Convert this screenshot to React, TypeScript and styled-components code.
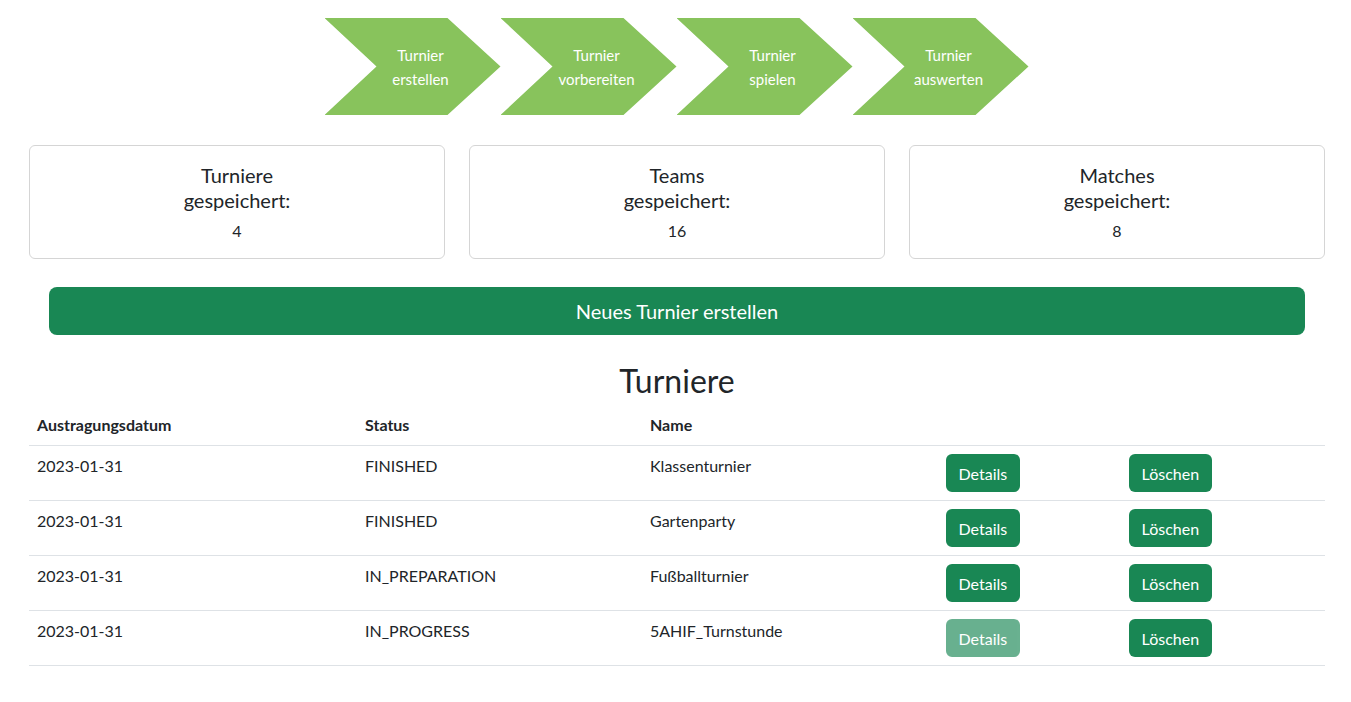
import React from "react";
import styled, { createGlobalStyle } from "styled-components";

const Global = createGlobalStyle`
  html, body { margin: 0; padding: 0; background: #fff; }
  body {
    font-family: "Segoe UI", Lato, "Noto Sans", "Liberation Sans", sans-serif;
    font-size: 16px;
    line-height: 1.5;
    color: #212529;
  }
  * { box-sizing: border-box; }
`;

const Page = styled.div`
  padding: 18px 26px 0 29px;
`;

const Steps = styled.div`
  display: flex;
  justify-content: center;
  padding-right: 1px;
`;

const Step = styled.div`
  width: 176px;
  height: 97px;
  background: #88c35c;
  clip-path: polygon(0 0, 123px 0, 176px 48.5px, 123px 97px, 0 97px, 52px 48.5px);
  color: #fff;
  font-size: 15px;
  line-height: 24px;
  display: flex;
  align-items: center;
  justify-content: center;
  text-align: center;
  padding-left: 16px;
  white-space: pre-line;
`;

const Cards = styled.div`
  display: grid;
  grid-template-columns: repeat(3, 1fr);
  gap: 24px;
  margin-top: 30px;
`;

const Card = styled.div`
  border: 1px solid #d5d5d5;
  border-radius: 6px;
  height: 114px;
  display: flex;
  flex-direction: column;
  align-items: center;
  padding-top: 17px;
`;

const CardTitle = styled.div`
  font-size: 20px;
  line-height: 25px;
  text-align: center;
  white-space: pre-line;
`;

const CardValue = styled.div`
  font-size: 16px;
  line-height: 24px;
  margin-top: 6px;
`;

const BigButton = styled.button`
  display: block;
  width: calc(100% - 40px);
  margin: 28px 20px 0;
  height: 48px;
  border: none;
  border-radius: 8px;
  background: #198754;
  color: #fff;
  font-family: inherit;
  font-size: 20px;
`;

const Heading = styled.h2`
  margin: 27px 0 5px;
  font-size: 32px;
  font-weight: 400;
  line-height: 1.2;
  text-align: center;
`;

const Table = styled.table`
  width: 100%;
  border-collapse: collapse;
`;

const Th = styled.th<{ $w?: number }>`
  text-align: left;
  font-weight: 700;
  padding: 8px;
  border-bottom: 1px solid #dee2e6;
  width: ${(p) => (p.$w ? `${p.$w}px` : "auto")};
`;

const Td = styled.td`
  padding: 8px;
  vertical-align: top;
  border-bottom: 1px solid #dee2e6;
`;

const Btn = styled.button<{ $disabled?: boolean }>`
  height: 38px;
  padding: 0 12.5px;
  border: none;
  border-radius: 6px;
  background: #198754;
  color: #fff;
  font-family: inherit;
  font-size: 16px;
  opacity: ${(p) => (p.$disabled ? 0.65 : 1)};
`;

const rows = [
  { date: "2023-01-31", status: "FINISHED", name: "Klassenturnier", dis: false },
  { date: "2023-01-31", status: "FINISHED", name: "Gartenparty", dis: false },
  { date: "2023-01-31", status: "IN_PREPARATION", name: "Fußballturnier", dis: false },
  { date: "2023-01-31", status: "IN_PROGRESS", name: "5AHIF_Turnstunde", dis: true },
];

export default function App() {
  return (
    <>
      <Global />
      <Page>
        <Steps>
          <Step>{"Turnier\nerstellen"}</Step>
          <Step>{"Turnier\nvorbereiten"}</Step>
          <Step>{"Turnier\nspielen"}</Step>
          <Step>{"Turnier\nauswerten"}</Step>
        </Steps>
        <Cards>
          <Card>
            <CardTitle>{"Turniere\ngespeichert:"}</CardTitle>
            <CardValue>4</CardValue>
          </Card>
          <Card>
            <CardTitle>{"Teams\ngespeichert:"}</CardTitle>
            <CardValue>16</CardValue>
          </Card>
          <Card>
            <CardTitle>{"Matches\ngespeichert:"}</CardTitle>
            <CardValue>8</CardValue>
          </Card>
        </Cards>
        <BigButton>Neues Turnier erstellen</BigButton>
        <Heading>Turniere</Heading>
        <Table>
          <thead>
            <tr>
              <Th $w={328}>Austragungsdatum</Th>
              <Th $w={285}>Status</Th>
              <Th $w={296}>Name</Th>
              <Th $w={183}></Th>
              <Th></Th>
            </tr>
          </thead>
          <tbody>
            {rows.map((r, i) => (
              <tr key={i}>
                <Td>{r.date}</Td>
                <Td>{r.status}</Td>
                <Td>{r.name}</Td>
                <Td>
                  <Btn $disabled={r.dis}>Details</Btn>
                </Td>
                <Td>
                  <Btn>Löschen</Btn>
                </Td>
              </tr>
            ))}
          </tbody>
        </Table>
      </Page>
    </>
  );
}
